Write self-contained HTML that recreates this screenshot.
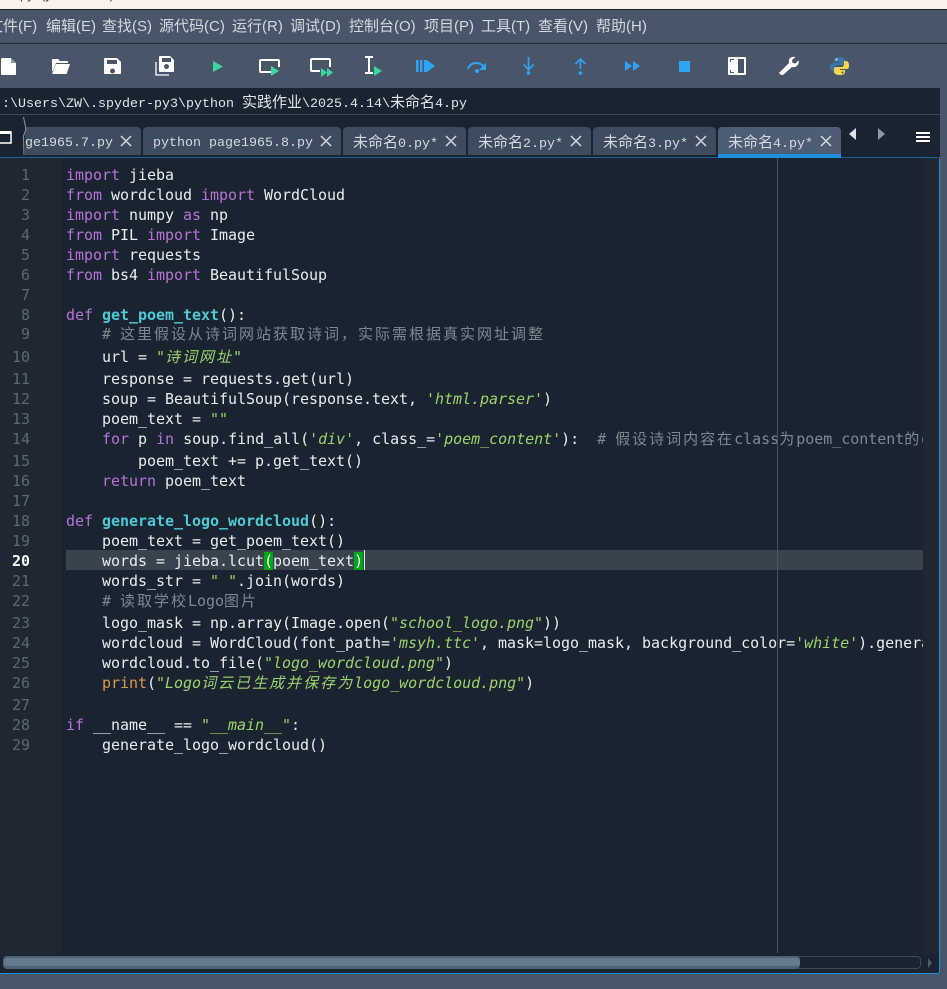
<!DOCTYPE html>
<html lang="zh"><head><meta charset="utf-8"><style>
html,body{margin:0;padding:0;background:#49566a}
body{width:947px;height:989px;position:relative;overflow:hidden;font-family:"Liberation Sans","Noto Sans CJK SC",sans-serif}
div,span.a,svg{position:absolute}
.m{top:17px;font-size:15px;line-height:20px;color:#d3d9df;white-space:pre}
.tab{top:127px;height:28px;background:#3e4c5f;border-radius:4px 4px 0 0}
.tt{top:133px;font:13.33px/18px "Liberation Mono","WenQuanYi Zen Hei",monospace;color:#d5dade;white-space:pre}
.tt i{font:normal 15px/18px "WenQuanYi Zen Hei","Noto Sans CJK SC",sans-serif}
.x{top:135px;width:12px;height:12px}
#ed{left:62px;top:158px;width:861px;height:795px;overflow:hidden;background:#1a2430}
.l{left:4px;height:20px;font:15px/20px "DejaVu Sans Mono","Liberation Mono",monospace;color:#e8ecef;white-space:pre;letter-spacing:-.03px}
.n{left:0;width:30px;text-align:right;font:15px/20px "DejaVu Sans Mono",monospace;color:#5d6873}
b.k,.k{color:#b673d6;font-weight:normal}
.s{color:#9ed26c;font-style:italic}
.c{color:#7f8891}
.f{color:#4fc9d6;font-weight:bold}
.o{color:#dd9650}
.z{font-family:"WenQuanYi Zen Hei","Noto Sans CJK SC",sans-serif;font-size:15px;letter-spacing:2px}
.g{background:#00a818;color:#fff}
</style></head><body>
<div style="left:0;top:0;width:947px;height:9px;background:#f9f1ec;overflow:hidden"><div style="left:20px;top:-13px;font-size:13px;line-height:16px;color:#444;white-space:pre">py  (y  hon 3.12)</div></div>
<div style="left:0;top:9px;width:947px;height:1px;background:#1a232e"></div>
<div style="left:0;top:43px;width:947px;height:1px;background:#1f2a37"></div>

<div class="m" style="left:-12px">文件(F)</div>
<div class="m" style="left:46px">编辑(E)</div>
<div class="m" style="left:102px">查找(S)</div>
<div class="m" style="left:159px">源代码(C)</div>
<div class="m" style="left:232px">运行(R)</div>
<div class="m" style="left:290px">调试(D)</div>
<div class="m" style="left:349px">控制台(O)</div>
<div class="m" style="left:424px">项目(P)</div>
<div class="m" style="left:481px">工具(T)</div>
<div class="m" style="left:538px">查看(V)</div>
<div class="m" style="left:596px">帮助(H)</div>

<svg style="left:0;top:44px" width="947" height="44" viewBox="0 44 947 44">
<path fill="#fff" d="M3 58h8l5 5v11q0 1-1 1H3q-2 0-2-1V59q0-1 2-1z"/><path fill="#49566a" d="M11 58v5h5z" opacity=".6"/>
<path fill="#fff" d="M52 60q0-1 1-1h5l2 2h7q1 0 1 1v1H56l-3 8H52z"/><path fill="#fff" d="M56 64h14l-3 9q0 1-1 1H52z"/>
<path fill="#fff" fill-rule="evenodd" d="M105 58h12l4 4v11q0 1-1 1h-15q-1 0-1-1V59q0-1 1-1zm2 2v4h10v-4zm5.500 8.500a2.500 2.500 0 1 0 .01 0z"/>
<path fill="#fff" fill-rule="evenodd" d="M160 56h10l4 4v11q0 1-1 1h-13q-1 0-1-1V57q0-1 1-1zm2 2v4h9v-4zm4.500 6a2.500 2.500 0 1 0 .01 0z"/>
<path fill="none" stroke="#fff" stroke-width="1.300" d="M156 62v13h13"/>
<path fill="#3dd6a3" d="M213 61l10 5.500-10 5.500z"/>
<path fill="none" stroke="#fff" stroke-width="2" d="M271 72h-10q-1 0-1-1v-10q0-1 1-1h17q1 0 1 1v6"/>
<path fill="#3dd6a3" d="M271 66l8 5-8 5z"/>
<path fill="none" stroke="#fff" stroke-width="2" d="M320 71h-8q-1 0-1-1v-10q0-1 1-1h17q1 0 1 1v7"/>
<path fill="#3dd6a3" d="M321 68l6 4.500-6 4.500zM327 68l6 4.500-6 4.500z"/>
<path fill="none" stroke="#fff" stroke-width="2" d="M365 57h8M369 57v16M365 73h8"/>
<path fill="#3dd6a3" d="M374 66l8 5-8 5z"/>
<path fill="#2fa3f6" d="M416 60h2.500v12H416zM420 60h2.500v12H420zM424 60h3l8 6-8 6h-3z"/>
<path fill="none" stroke="#2fa3f6" stroke-width="2" d="M468 69q2-6 8-6 5 0 8 4"/><path fill="#2fa3f6" d="M486 63v7h-7z"/><circle cx="477" cy="71" r="2" fill="#2fa3f6"/>
<path fill="none" stroke="#2fa3f6" stroke-width="1.600" d="M528.500 57v14M523.500 64.500l5 5 5-5"/><circle cx="528.500" cy="73" r="1.800" fill="#2fa3f6"/>
<path fill="none" stroke="#2fa3f6" stroke-width="1.600" d="M580.500 59v10M575.500 64l5-5 5 5"/><circle cx="580.500" cy="73" r="1.800" fill="#2fa3f6"/>
<path fill="#2fa3f6" d="M625 61l7 5-7 5zM633 61l7 5-7 5z"/>
<rect x="679" y="61" width="11" height="11" fill="#2fa3f6"/>
<path fill="#fff" fill-rule="evenodd" d="M729 57h16q1 0 1 1v16q0 1-1 1h-16q-1 0-1-1V58q0-1 1-1zm9 2v14h6V59zm-8 0v3h1v-2h3v-1zm0 11v3h4v-1h-3v-2z"/>
<path fill="#fff" d="M781 75l-2-2 10-10q-1-4 2-5.500 2-1.200 4.500-.5l-3.500 3 .5 3 3 .5 3-3.200q.7 3-1 5-2 2.500-5.500 1.700L783 75z"/>
<path fill="#3a76a8" d="M839 57c-3 0-5 1-5 3v2h5v1h-7c-2 0-2 2-2 4s1 4 3 4h2v-3c0-2 1-3 3-3h5c1 0 2-1 2-2v-3c0-2-3-3-6-3z"/>
<path fill="#f7d44c" d="M840 75c3 0 5-1 5-3v-2h-5v-1h7c2 0 2-2 2-4s-1-4-3-4h-2v3c0 2-1 3-3 3h-5c-1 0-2 1-2 2v3c0 2 3 3 6 3z"/>
<circle cx="836.500" cy="59.500" r="1" fill="#dfe6ee"/><circle cx="842.500" cy="72.500" r="1" fill="#5b5a30"/>
</svg>

<div style="left:0;top:88px;width:940px;height:26px;background:#1a2430"></div>
<div style="left:0;top:114px;width:940px;height:1px;background:#3b4a5e"></div>
<div style="left:0;top:115px;width:940px;height:42px;background:#1a2430"></div>
<div style="left:2px;top:94px;font:13.33px/16px 'Liberation Mono','WenQuanYi Zen Hei',monospace;color:#dfe4e8;white-space:pre">:\Users\ZW\.spyder-py3\python <span style="font:15px/16px 'WenQuanYi Zen Hei','Noto Sans CJK SC',sans-serif">实践作业</span>\2025.4.14\<span style="font:15px/16px 'WenQuanYi Zen Hei','Noto Sans CJK SC',sans-serif">未命名</span>4.py</div>

<div class="tab" style="left:25px;width:116px;border-top-left-radius:0"></div>
<div class="tab" style="left:143px;width:198px"></div>
<div class="tab" style="left:343px;width:123px"></div>
<div class="tab" style="left:468px;width:123px"></div>
<div class="tab" style="left:593px;width:123px"></div>
<div class="tab" style="left:718px;width:123px;background:#4d5d73"></div>
<svg style="left:0;top:116px" width="30" height="42" viewBox="0 116 30 42"><path fill="none" stroke="#fff" stroke-width="1.500" d="M-1 132h12v11H-1"/><path fill="#fff" d="M-1 131h12v3H-1z"/><path fill="none" stroke="#8794a3" d="M23.500 117l2.500 12-2.500 7 .5 19"/></svg>
<div style="left:718px;top:154px;width:123px;height:3px;background:#1f8fe0"></div>
<div class="tt" style="left:25px;top:135px">ge1965.7.py</div>
<div class="tt" style="left:153px;top:135px">python page1965.8.py</div>
<div class="tt" style="left:353px"><i>未命名</i>0.py*</div>
<div class="tt" style="left:478px"><i>未命名</i>2.py*</div>
<div class="tt" style="left:603px"><i>未命名</i>3.py*</div>
<div class="tt" style="left:728px"><i>未命名</i>4.py*</div>
<svg style="left:0;top:127px" width="947" height="30" viewBox="0 127 947 30"><path fill="none" stroke="#d5dade" stroke-width="1.500" d="M121 136l10 10m0-10l-10 10M321 136l10 10m0-10l-10 10M446 136l10 10m0-10l-10 10M571 136l10 10m0-10l-10 10M696 136l10 10m0-10l-10 10M821 136l10 10m0-10l-10 10"/>
<path fill="#dde2e6" d="M849 134l7-6v12z"/><path fill="#8d98a3" d="M885 134l-7-6v12z"/><path fill="#fff" d="M916 132h14v2h-14zM916 136h14v2h-14zM916 140h14v2h-14z"/></svg>

<div style="left:0;top:157px;width:939px;height:815px;border:solid #1f8fe0;border-width:1px 1px 1px 0;border-top-color:#1c6399;border-radius:0 3px 3px 0;background:#1a2430"></div>
<div style="left:718px;top:155px;width:123px;height:3px;background:#1f8fe0"></div>
<div style="left:0;top:158px;width:62px;height:796px;background:#1f2832"></div>
<div style="left:923px;top:158px;width:16px;height:796px;background:#1f2832"></div>

<div class="n" style="top:165px">1</div><div class="n" style="top:185px">2</div><div class="n" style="top:205px">3</div><div class="n" style="top:225px">4</div><div class="n" style="top:245px">5</div><div class="n" style="top:265px">6</div><div class="n" style="top:285px">7</div><div class="n" style="top:305px">8</div><div class="n" style="top:324px">9</div><div class="n" style="top:347px">10</div><div class="n" style="top:369px">11</div><div class="n" style="top:389px">12</div><div class="n" style="top:409px">13</div><div class="n" style="top:429px">14</div><div class="n" style="top:451px">15</div><div class="n" style="top:471px">16</div><div class="n" style="top:491px">17</div><div class="n" style="top:511px">18</div><div class="n" style="top:531px">19</div><div class="n" style="top:551px;color:#fff;font-weight:bold">20</div><div class="n" style="top:571px">21</div><div class="n" style="top:591px">22</div><div class="n" style="top:613px">23</div><div class="n" style="top:633px">24</div><div class="n" style="top:653px">25</div><div class="n" style="top:673px">26</div><div class="n" style="top:695px">27</div><div class="n" style="top:715px">28</div><div class="n" style="top:735px">29</div>

<div id="ed">
<div style="left:4px;top:392px;width:857px;height:20px;background:#39434e"></div>
<div class="l" style="top:7px"><span class="k">import</span> jieba</div>
<div class="l" style="top:27px"><span class="k">from</span> wordcloud <span class="k">import</span> WordCloud</div>
<div class="l" style="top:47px"><span class="k">import</span> numpy <span class="k">as</span> np</div>
<div class="l" style="top:67px"><span class="k">from</span> PIL <span class="k">import</span> Image</div>
<div class="l" style="top:87px"><span class="k">import</span> requests</div>
<div class="l" style="top:107px"><span class="k">from</span> bs4 <span class="k">import</span> BeautifulSoup</div>
<div class="l" style="top:147px"><span class="k">def</span> <span class="f">get_poem_text</span>():</div>
<div class="l c" style="top:166px">    # <span class="z">这里假设从诗词网站获取诗词，实际需根据真实网址调整</span></div>
<div class="l" style="top:189px">    url = <span class="s">"<span class="z">诗词网址</span>"</span></div>
<div class="l" style="top:211px">    response = requests.get(url)</div>
<div class="l" style="top:231px">    soup = BeautifulSoup(response.text, <span class="s">'html.parser'</span>)</div>
<div class="l" style="top:251px">    poem_text = <span class="s">""</span></div>
<div class="l" style="top:271px">    <span class="k">for</span> p <span class="k">in</span> soup.find_all(<span class="s">'div'</span>, class_=<span class="s">'poem_content'</span>):  <span class="c"># <span class="z">假设诗词内容在</span>class<span class="z">为</span>poem_content<span class="z">的</span>div</span></div>
<div class="l" style="top:293px">        poem_text += p.get_text()</div>
<div class="l" style="top:313px">    <span class="k">return</span> poem_text</div>
<div class="l" style="top:353px"><span class="k">def</span> <span class="f">generate_logo_wordcloud</span>():</div>
<div class="l" style="top:373px">    poem_text = get_poem_text()</div>
<div class="l" style="top:393px">    words = jieba.lcut<span class="g">(</span>poem_text<span class="g">)</span></div>
<div class="l" style="top:413px">    words_str = <span class="s">" "</span>.join(words)</div>
<div class="l c" style="top:433px">    # <span class="z">读取学校</span>Logo<span class="z">图片</span></div>
<div class="l" style="top:455px">    logo_mask = np.array(Image.open(<span class="s">"school_logo.png"</span>))</div>
<div class="l" style="top:475px">    wordcloud = WordCloud(font_path=<span class="s">'msyh.ttc'</span>, mask=logo_mask, background_color=<span class="s">'white'</span>).generate(text)</div>
<div class="l" style="top:495px">    wordcloud.to_file(<span class="s">"logo_wordcloud.png"</span>)</div>
<div class="l" style="top:515px">    <span class="o">print</span>(<span class="s">"Logo<span class="z">词云已生成并保存为</span>logo_wordcloud.png"</span>)</div>
<div class="l" style="top:557px"><span class="k">if</span> __name__ == <span class="s">"__main__"</span>:</div>
<div class="l" style="top:577px">    generate_logo_wordcloud()</div>
<div style="left:302px;top:392px;width:1px;height:20px;background:#e8ecef"></div>
<div style="left:715px;top:0;width:1px;height:795px;background:#4b5560"></div>
</div>

<div style="left:3px;top:956px;width:916px;height:11px;border:1px solid #3c4a5c;border-radius:4px;background:#1a2430"></div>
<div style="left:3px;top:956px;width:797px;height:13px;border-radius:4px;background:#4f6173"></div>
<div style="left:4px;top:958px;width:796px;height:8px;border-radius:3px;background:#637b8c"></div>
<svg style="left:926px;top:955px" width="10" height="16"><path fill="#4f5f70" d="M2 3l4 5-4 5z"/></svg>
</body></html>
